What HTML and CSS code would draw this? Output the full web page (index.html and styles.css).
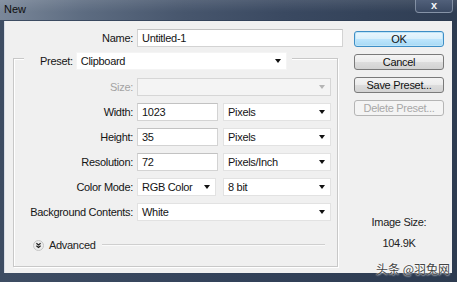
FILE: index.html
```html
<!DOCTYPE html>
<html>
<head>
<meta charset="utf-8">
<link rel="stylesheet" href="styles.css">
</head>
<body>
<div class="window">
  <div class="titlebar">
    <span class="title">New</span>
    <span class="close">x</span>
  </div>
  <div class="dialog">
    <div class="main">
      <div class="name-row">
        <span class="lbl name-lbl">Name:</span>
        <div class="field input name-input">Untitled-1</div>
      </div>
      <div class="group">
        <div class="group-head">
          <span class="head-lbl">Preset:</span>
          <div class="field select preset"><span>Clipboard</span><i class="arrow"></i></div>
        </div>
        <div class="grid">
          <span class="lbl disabled">Size:</span>
          <div class="field select off"><span></span><i class="arrow"></i></div>

          <span class="lbl">Width:</span>
          <div class="pair">
            <div class="field input num">1023</div>
            <div class="field select unit"><span>Pixels</span><i class="arrow"></i></div>
          </div>

          <span class="lbl">Height:</span>
          <div class="pair">
            <div class="field input num">35</div>
            <div class="field select unit"><span>Pixels</span><i class="arrow"></i></div>
          </div>

          <span class="lbl">Resolution:</span>
          <div class="pair">
            <div class="field input num">72</div>
            <div class="field select unit"><span>Pixels/Inch</span><i class="arrow"></i></div>
          </div>

          <span class="lbl">Color Mode:</span>
          <div class="pair">
            <div class="field select mode"><span>RGB Color</span><i class="arrow"></i></div>
            <div class="field select unit"><span>8 bit</span><i class="arrow"></i></div>
          </div>

          <span class="lbl">Background Contents:</span>
          <div class="field select"><span>White</span><i class="arrow"></i></div>
        </div>
        <div class="advanced">
          <svg class="chev" width="11" height="11" viewBox="0 0 11 11">
            <circle cx="5.5" cy="5.5" r="5" fill="#ececec" stroke="#c4c4c4"/>
            <path d="M3.4 3.2 L5.5 4.9 L7.6 3.2 M3.4 5.8 L5.5 7.5 L7.6 5.8" fill="none" stroke="#1e1e1e" stroke-width="1.2"/>
          </svg>
          <span class="adv-text">Advanced</span>
          <span class="adv-line"></span>
        </div>
      </div>
    </div>
    <div class="side">
      <div class="btn ok">OK</div>
      <div class="btn">Cancel</div>
      <div class="btn">Save Preset...</div>
      <div class="btn dis">Delete Preset...</div>
      <div class="info">
        <div>Image Size:</div>
        <div class="info-val">104.9K</div>
      </div>
    </div>
  </div>
  <div class="watermark">头条 @羽兔网</div>
</div>
</body>
</html>
```

FILE: styles.css
```css
html, body {
  margin: 0;
  padding: 0;
  background: #2f3c50;
}

.window {
  position: relative;
  width: 457px;
  height: 282px;
  display: flex;
  flex-direction: column;
  background: linear-gradient(90deg, #3e4d63 0%, #33425a 50%, #2d3b50 100%);
  font-family: "Liberation Sans", Arial, sans-serif;
  font-size: 11px;
  letter-spacing: -0.3px;
  color: #141414;
  overflow: hidden;
}

.titlebar {
  height: 20px;
  flex: none;
  display: flex;
  justify-content: space-between;
  align-items: flex-start;
  background:
    linear-gradient(180deg, rgba(255,255,255,0.10) 0%, rgba(255,255,255,0) 60%),
    linear-gradient(90deg, #7a8799 0%, #5d6c81 18%, #47566d 40%, #3a4961 62%, #34435a 80%, #2f3d53 100%);
}

.title {
  padding: 3px 0 0 4px;
  line-height: 12px;
  color: #0e0e0e;
  letter-spacing: 0;
}

.close {
  width: 38px;
  height: 13px;
  margin-right: 4px;
  box-sizing: border-box;
  border: 1px solid rgba(200,210,225,0.45);
  border-top: none;
  border-radius: 0 0 4px 4px;
  background: linear-gradient(180deg, #51607a, #3b4a63);
  color: #f4f6fa;
  font-weight: bold;
  font-size: 11px;
  line-height: 11px;
  text-align: center;
}

.dialog {
  flex: 1;
  margin: 1px 5px 9px 4px;
  background: #f0f0f0;
  display: flex;
  box-shadow: inset 1px 0 0 #d8dde6;
}

.main {
  width: 339px;
  flex: none;
  box-sizing: border-box;
  padding: 8px 0 0 9px;
}

.name-row {
  display: flex;
  gap: 4px;
}

.lbl {
  text-align: right;
  line-height: 18px;
  white-space: nowrap;
}

.name-lbl {
  width: 120px;
}

.lbl.disabled {
  color: #a3a3a3;
}

.field {
  height: 18px;
  box-sizing: border-box;
  background: #fff;
  border: 1px solid #d3d3d3;
  border-top-color: #c2c2c2;
  line-height: 16px;
  padding: 0 4px;
  white-space: nowrap;
}

.name-input {
  width: 206px;
}

.select {
  display: flex;
  align-items: center;
  justify-content: space-between;
  border-color: #e2e2e2;
}

.arrow {
  display: block;
  width: 0;
  height: 0;
  margin-right: 1px;
  border-left: 3px solid transparent;
  border-right: 3px solid transparent;
  border-top: 4px solid #111;
}

.select.off {
  background: #f4f4f4;
  border-color: #d6d6d6;
}

.select.off .arrow {
  border-top-color: #b5b5b5;
}

.group {
  margin-top: 11px;
  width: 325px;
  box-sizing: border-box;
  border: 1px solid #c8c8c8;
  box-shadow: inset 1px 1px 0 #fff, 1px 1px 0 #fff;
  padding-bottom: 14px;
}

.group-head {
  display: flex;
  align-items: center;
  gap: 3px;
  width: fit-content;
  margin: -7px 0 8px 10px;
  padding: 0 5px 0 16px;
  background: #f0f0f0;
}

.head-lbl {
  line-height: 18px;
}

.preset {
  width: 211px;
  border-color: #f4f4f4;
}

.grid {
  display: grid;
  grid-template-columns: 119px 194px;
  column-gap: 4px;
  row-gap: 7px;
}

.pair {
  display: flex;
  justify-content: space-between;
}

.num {
  width: 81px;
}

.unit {
  width: 108px;
}

.mode {
  width: 79px;
}

.advanced {
  margin-top: 17px;
  height: 14px;
  display: flex;
  align-items: center;
  padding-left: 19px;
}

.chev {
  display: block;
  flex: none;
}

.adv-text {
  margin-left: 5px;
  color: #222;
}

.adv-line {
  flex: 1;
  height: 0;
  margin: 0 12px 0 6px;
  border-top: 1px solid #cfcfcf;
  border-bottom: 1px solid #fafafa;
}

.side {
  margin-left: 11px;
  padding-top: 10px;
  display: flex;
  flex-direction: column;
  gap: 7px;
  width: 90px;
}

.btn {
  height: 16px;
  box-sizing: border-box;
  border: 1px solid #7a7a7a;
  border-radius: 3px;
  background: linear-gradient(180deg, #f4f4f4 0%, #ebebeb 50%, #dddddd 51%, #d2d2d2 100%);
  text-align: center;
  line-height: 14px;
  color: #111;
}

.btn.ok {
  border-color: #3d8ec6;
  background: linear-gradient(180deg, #eaf6fd 0%, #d9f0fc 50%, #bee6fd 51%, #a7d9f5 100%);
  box-shadow: inset 0 0 0 1px #bfe4f7;
}

.btn.dis {
  border-color: #b5b5b5;
  background: #f4f4f4;
  color: #a8a8a8;
}

.info {
  margin-top: 92px;
  text-align: center;
  line-height: 14px;
  color: #222;
}

.info-val {
  margin-top: 7px;
}

.watermark {
  position: absolute;
  right: 7px;
  bottom: 7px;
  font-family: "Noto Sans CJK SC", sans-serif;
  font-size: 12px;
  line-height: 13px;
  letter-spacing: 0;
  color: #444;
  text-shadow: 0 0 2px #fff, 0 0 2px #fff;
}
```
